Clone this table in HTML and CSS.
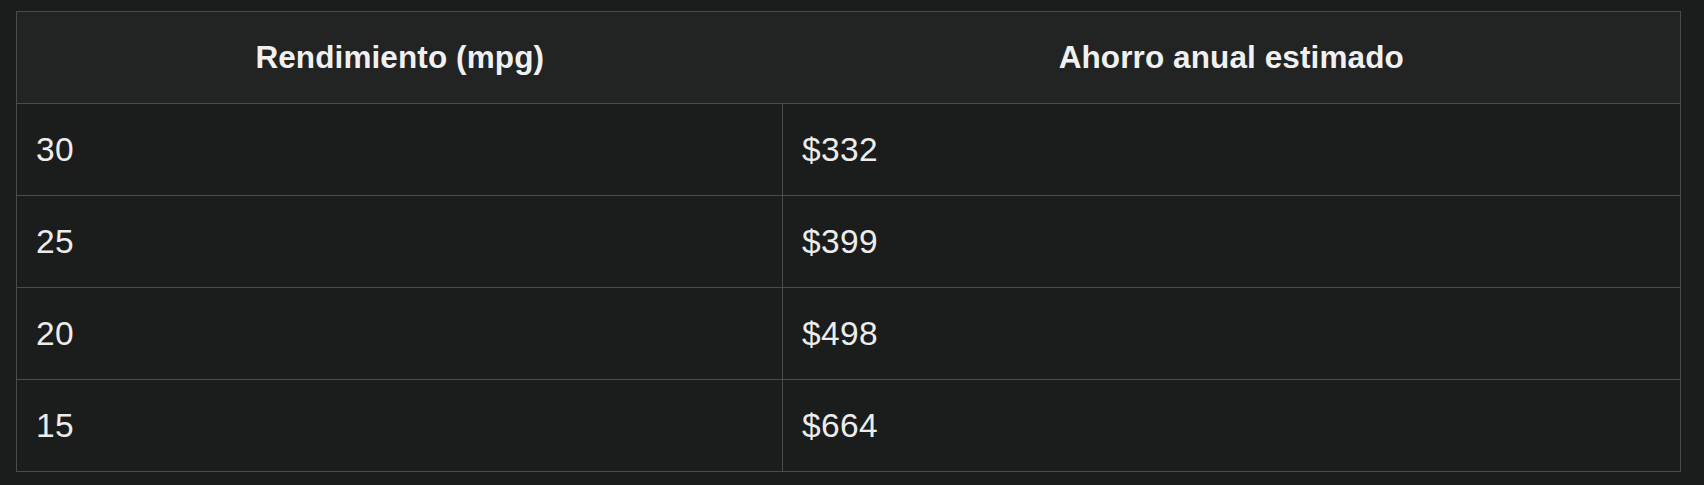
FILE: index.html
```html
<!DOCTYPE html>
<html lang="es">
<head>
<meta charset="utf-8">
<title>Ahorro anual</title>
<link rel="stylesheet" href="styles.css">
</head>
<body>
<div class="wrap">
<table class="data">
  <colgroup>
    <col class="c1">
    <col class="c2">
  </colgroup>
  <thead>
    <tr><th>Rendimiento (mpg)</th><th>Ahorro anual estimado</th></tr>
  </thead>
  <tbody>
    <tr><td>30</td><td>$332</td></tr>
    <tr><td>25</td><td>$399</td></tr>
    <tr><td>20</td><td>$498</td></tr>
    <tr><td>15</td><td>$664</td></tr>
  </tbody>
</table>
</div>
</body>
</html>
```
FILE: styles.css
```css
html, body {
  margin: 0;
  padding: 0;
  background: #1b1c1c;
}
.wrap {
  padding: 11px 0 0 16px;
}
.data {
  border-collapse: collapse;
  width: 1664px;
  table-layout: fixed;
  font-family: "Liberation Sans", Arial, sans-serif;
  color: #ececec;
  border: 1px solid #4a4b4c;
}
.c1 { width: 766px; }
.c2 { width: 898px; }
.data th {
  background: #222323;
  height: 91px;
  padding: 0;
  font-size: 31.5px;
  font-weight: 700;
  letter-spacing: 0.1px;
  text-align: center;
  vertical-align: middle;
  color: #f0f0f0;
  border-bottom: 1px solid #4a4b4c;
}
.data td {
  height: 91px;
  padding: 0 0 0 19px;
  font-size: 33.5px;
  font-weight: 400;
  letter-spacing: 0.4px;
  vertical-align: middle;
  border: 1px solid #4a4b4c;
  background: #1b1c1c;
}
```
